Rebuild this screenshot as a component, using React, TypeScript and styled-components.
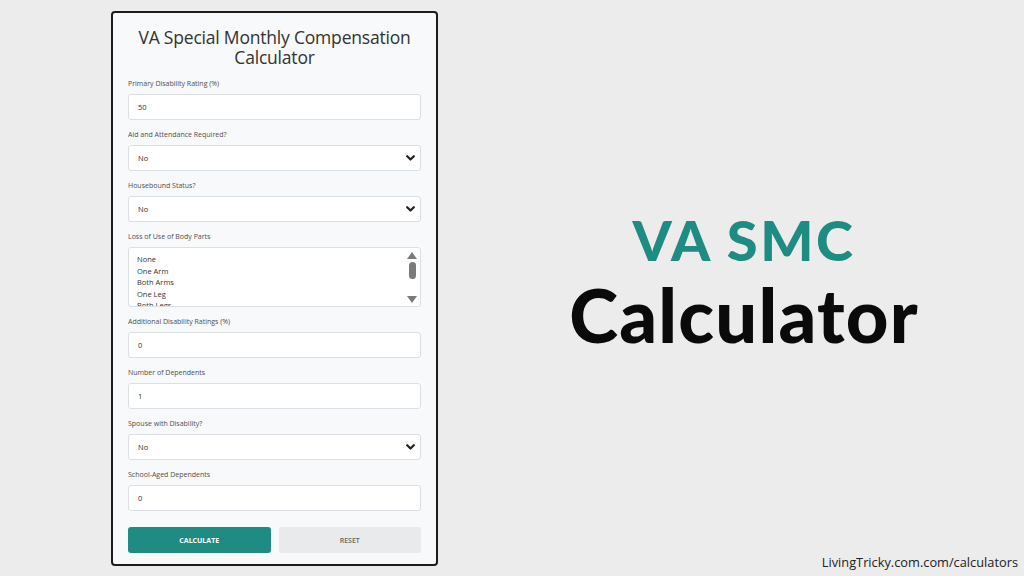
import React, { useState } from 'react'
import styled, { createGlobalStyle } from 'styled-components'

const GlobalStyle = createGlobalStyle`
  html, body {
    margin: 0;
    padding: 0;
    background: #ececec;
  }
  * {
    box-sizing: border-box;
  }
`

const bodyParts = ['None', 'One Arm', 'Both Arms', 'One Leg', 'Both Legs']

const ChevronDown: React.FC = () => (
  <svg width="9" height="6" viewBox="0 0 9 6">
    <path d="M1.2 1.2 L4.5 4.5 L7.8 1.2" fill="none" stroke="#222" strokeWidth="2.2" strokeLinecap="round" strokeLinejoin="round" />
  </svg>
)

interface FieldProps {
  label: string
  children: React.ReactNode
}

const Field: React.FC<FieldProps> = ({ label, children }) => (
  <FieldBox>
    <Label>{label}</Label>
    {children}
  </FieldBox>
)

const FakeSelect: React.FC<{ value: string }> = ({ value }) => (
  <SelectBox>
    <span>{value}</span>
    <ChevronDown />
  </SelectBox>
)

const App: React.FC = () => {
  const [primary, setPrimary] = useState('50')
  const [additional, setAdditional] = useState('0')
  const [dependents, setDependents] = useState('1')
  const [school, setSchool] = useState('0')

  return (
    <>
      <GlobalStyle />
      <Page>
        <LeftColumn>
          <Card>
            <Title>VA Special Monthly Compensation Calculator</Title>
            <Field label="Primary Disability Rating (%)">
              <TextInput value={primary} onChange={(e) => setPrimary(e.target.value)} />
            </Field>
            <Field label="Aid and Attendance Required?">
              <FakeSelect value="No" />
            </Field>
            <Field label="Housebound Status?">
              <FakeSelect value="No" />
            </Field>
            <Field label="Loss of Use of Body Parts">
              <ListBox>
                <OptionList>
                  {bodyParts.map((p) => (
                    <OptionItem key={p}>{p}</OptionItem>
                  ))}
                </OptionList>
                <ScrollTrack>
                  <svg width="10" height="7" viewBox="0 0 10 7">
                    <path d="M0 7 L5 0 L10 7 Z" fill="#7a7a7a" />
                  </svg>
                  <ScrollThumb />
                  <Spacer />
                  <svg width="10" height="7" viewBox="0 0 10 7">
                    <path d="M0 0 L5 7 L10 0 Z" fill="#7a7a7a" />
                  </svg>
                </ScrollTrack>
              </ListBox>
            </Field>
            <Field label="Additional Disability Ratings (%)">
              <TextInput value={additional} onChange={(e) => setAdditional(e.target.value)} />
            </Field>
            <Field label="Number of Dependents">
              <TextInput value={dependents} onChange={(e) => setDependents(e.target.value)} />
            </Field>
            <Field label="Spouse with Disability?">
              <FakeSelect value="No" />
            </Field>
            <Field label="School-Aged Dependents">
              <TextInput value={school} onChange={(e) => setSchool(e.target.value)} />
            </Field>
            <ButtonRow>
              <ActionButton primary>CALCULATE</ActionButton>
              <ActionButton>RESET</ActionButton>
            </ButtonRow>
          </Card>
        </LeftColumn>
        <RightColumn>
          <Hero>
            <HeroTop>VA SMC</HeroTop>
            <HeroBottom>Calculator</HeroBottom>
          </Hero>
          <Footer>LivingTricky.com.com/calculators</Footer>
        </RightColumn>
      </Page>
    </>
  )
}

export default App

const Page = styled.div`
  display: flex;
  width: 1024px;
  height: 576px;
  overflow: hidden;
`

const LeftColumn = styled.div`
  padding: 11px 0 0 111px;
`

const Card = styled.div`
  width: 327px;
  padding: 14px 15px 11px;
  background: #f8f9fa;
  border: 2px solid #1c1c1c;
  border-radius: 4px;
  font-family: 'Open Sans', 'Noto Sans', sans-serif;
`

const Title = styled.h1`
  margin: 0 6px 12px;
  font-size: 17.5px;
  line-height: 20px;
  font-weight: 500;
  color: #333;
  text-align: center;
  letter-spacing: -0.2px;
`

const FieldBox = styled.div`
  display: flex;
  flex-direction: column;
  margin-bottom: 10px;
`

const Label = styled.label`
  font-size: 7px;
  line-height: 10px;
  color: #4f4f4f;
  margin-bottom: 5px;
`

const TextInput = styled.input`
  height: 26px;
  width: 100%;
  padding: 0 9px;
  font-family: inherit;
  font-size: 7.5px;
  color: #333;
  background: #fff;
  border: 1px solid #dcdfe3;
  border-radius: 3px;
  outline: none;
`

const SelectBox = styled.div`
  display: flex;
  align-items: center;
  justify-content: space-between;
  height: 26px;
  padding: 0 5px 0 9px;
  font-size: 7.5px;
  color: #333;
  background: #fff;
  border: 1px solid #dcdfe3;
  border-radius: 3px;
`

const ListBox = styled.div`
  display: flex;
  height: 60px;
  background: #fff;
  border: 1px solid #dcdfe3;
  border-radius: 3px;
  overflow: hidden;
`

const OptionList = styled.div`
  flex: 1;
  padding: 6px 8px 0;
  overflow: hidden;
`

const OptionItem = styled.div`
  font-size: 7.5px;
  line-height: 11.5px;
  color: #333;
`

const ScrollTrack = styled.div`
  display: flex;
  flex-direction: column;
  align-items: center;
  width: 16px;
  padding: 4px 0 3px;
  gap: 3px;
`

const ScrollThumb = styled.div`
  width: 7px;
  height: 17px;
  border-radius: 4px;
  background: #7a7a7a;
`

const Spacer = styled.div`
  flex: 1;
`

const ButtonRow = styled.div`
  display: flex;
  gap: 8px;
  padding-top: 6px;
`

const ActionButton = styled.button<{ primary?: boolean }>`
  flex: 1;
  height: 26px;
  border: none;
  border-radius: 3px;
  font-family: inherit;
  font-size: 7px;
  font-weight: ${(p) => (p.primary ? 700 : 600)};
  color: ${(p) => (p.primary ? '#fff' : '#666')};
  background: ${(p) => (p.primary ? '#1f8c84' : '#e9eaeb')};
  cursor: pointer;
`

const RightColumn = styled.div`
  flex: 1;
  display: flex;
  flex-direction: column;
`

const Hero = styled.div`
  flex: 1;
  display: flex;
  flex-direction: column;
  align-items: center;
  justify-content: center;
  padding: 10px 0 0 26px;
  font-family: Lato, 'Noto Sans', sans-serif;
  font-weight: 900;
`

const HeroTop = styled.div`
  font-size: 56px;
  line-height: 66px;
  letter-spacing: 2.5px;
  color: #1f8c84;
`

const HeroBottom = styled.div`
  font-size: 74px;
  line-height: 84px;
  letter-spacing: 1.2px;
  color: #0a0a0a;
`

const Footer = styled.div`
  align-self: flex-end;
  padding: 0 6px 5px 0;
  font-family: 'Open Sans', 'Noto Sans', sans-serif;
  font-size: 12.8px;
  color: #222;
`
